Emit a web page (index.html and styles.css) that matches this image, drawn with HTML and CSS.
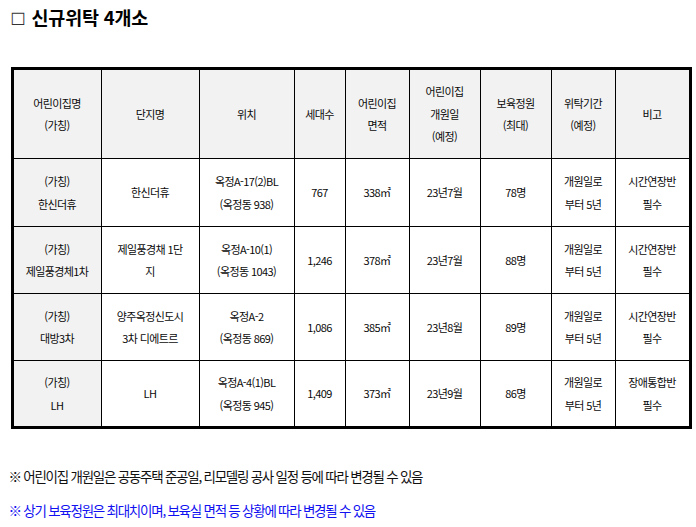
FILE: index.html
```html
<!DOCTYPE html>
<html lang="ko">
<head>
<meta charset="utf-8">
<link rel="stylesheet" href="styles.css">
</head>
<body>
<div class="page">
  <h2 class="title"><span class="box">☐</span> 신규위탁 4개소</h2>
  <table class="grid">
    <colgroup>
      <col class="c1"><col class="c2"><col class="c3"><col class="c4"><col class="c5"><col class="c6"><col class="c7"><col class="c8"><col class="c9">
    </colgroup>
    <tr class="head">
      <td>어린이집명<br>(가칭)</td>
      <td>단지명</td>
      <td>위치</td>
      <td>세대수</td>
      <td>어린이집<br>면적</td>
      <td>어린이집<br>개원일<br>(예정)</td>
      <td>보육정원<br>(최대)</td>
      <td>위탁기간<br>(예정)</td>
      <td>비고</td>
    </tr>
    <tr class="r1">
      <td class="name">(가칭)<br>한신더휴</td>
      <td>한신더휴</td>
      <td>옥정A-17(2)BL<br>(옥정동 938)</td>
      <td>767</td>
      <td>338㎡</td>
      <td>23년7월</td>
      <td>78명</td>
      <td>개원일로<br>부터 5년</td>
      <td>시간연장반<br>필수</td>
    </tr>
    <tr class="r2">
      <td class="name">(가칭)<br>제일풍경체1차</td>
      <td>제일풍경채 1단<br>지</td>
      <td>옥정A-10(1)<br>(옥정동 1043)</td>
      <td>1,246</td>
      <td>378㎡</td>
      <td>23년7월</td>
      <td>88명</td>
      <td>개원일로<br>부터 5년</td>
      <td>시간연장반<br>필수</td>
    </tr>
    <tr class="r3">
      <td class="name">(가칭)<br>대방3차</td>
      <td>양주옥정신도시<br>3차 디에트르</td>
      <td>옥정A-2<br>(옥정동 869)</td>
      <td>1,086</td>
      <td>385㎡</td>
      <td>23년8월</td>
      <td>89명</td>
      <td>개원일로<br>부터 5년</td>
      <td>시간연장반<br>필수</td>
    </tr>
    <tr class="r4">
      <td class="name">(가칭)<br>LH</td>
      <td>LH</td>
      <td>옥정A-4(1)BL<br>(옥정동 945)</td>
      <td>1,409</td>
      <td>373㎡</td>
      <td>23년9월</td>
      <td>86명</td>
      <td>개원일로<br>부터 5년</td>
      <td>장애통합반<br>필수</td>
    </tr>
  </table>
  <p class="note">※ 어린이집 개원일은 공동주택 준공일, 리모델링 공사 일정 등에 따라 변경될 수 있음</p>
  <p class="note blue">※ 상기 보육정원은 최대치이며, 보육실 면적 등 상황에 따라 변경될 수 있음</p>
</div>
</body>
</html>
```

FILE: styles.css
```css
html, body {
  margin: 0;
  padding: 0;
  background: #ffffff;
}
body {
  font-family: "Noto Sans CJK KR", "Noto Sans", sans-serif;
  color: #111111;
}
.page {
  padding: 0 0 0 10.5px;
}
.title {
  margin: 0;
  height: 34px;
  line-height: 34px;
  font-size: 18.5px;
  font-weight: bold;
  color: #000000;
  letter-spacing: -0.2px;
  margin-left: -1px;
}
.title .box {
  font-family: "DejaVu Sans", sans-serif;
  font-weight: normal;
  font-size: 17px;
  color: #333333;
  margin-left: 1px;
  margin-right: 1px;
}
.grid {
  margin-top: 33px;
  width: 678px;
  table-layout: fixed;
  border-collapse: collapse;
  border: 3px solid #000000;
  font-size: 11px;
  letter-spacing: -0.6px;
  color: #0a0a0a;
}
.c1 { width: 89px; }
.c2 { width: 98px; }
.c3 { width: 95px; }
.c4 { width: 51px; }
.c5 { width: 64px; }
.c6 { width: 71px; }
.c7 { width: 71px; }
.c8 { width: 64px; }
.c9 { width: 75px; }
.grid td {
  border: 1px solid #000000;
  text-align: center;
  vertical-align: middle;
  line-height: 22.5px;
  padding: 0 2px;
}
.grid .head td {
  background: #f2f2f2;
}
.grid td.name {
  background: #f2f2f2;
}
.head { height: 90px; }
.r1 { height: 68px; }
.r2 { height: 67px; }
.r3 { height: 67px; }
.r4 { height: 67px; }
.note {
  margin: 0 0 0 -2px;
  font-size: 13.5px;
  letter-spacing: -1.25px;
  line-height: 34px;
  color: #111111;
}
.note:first-of-type {
  margin-top: 30px;
}
.blue {
  color: #1010f0;
}
```
